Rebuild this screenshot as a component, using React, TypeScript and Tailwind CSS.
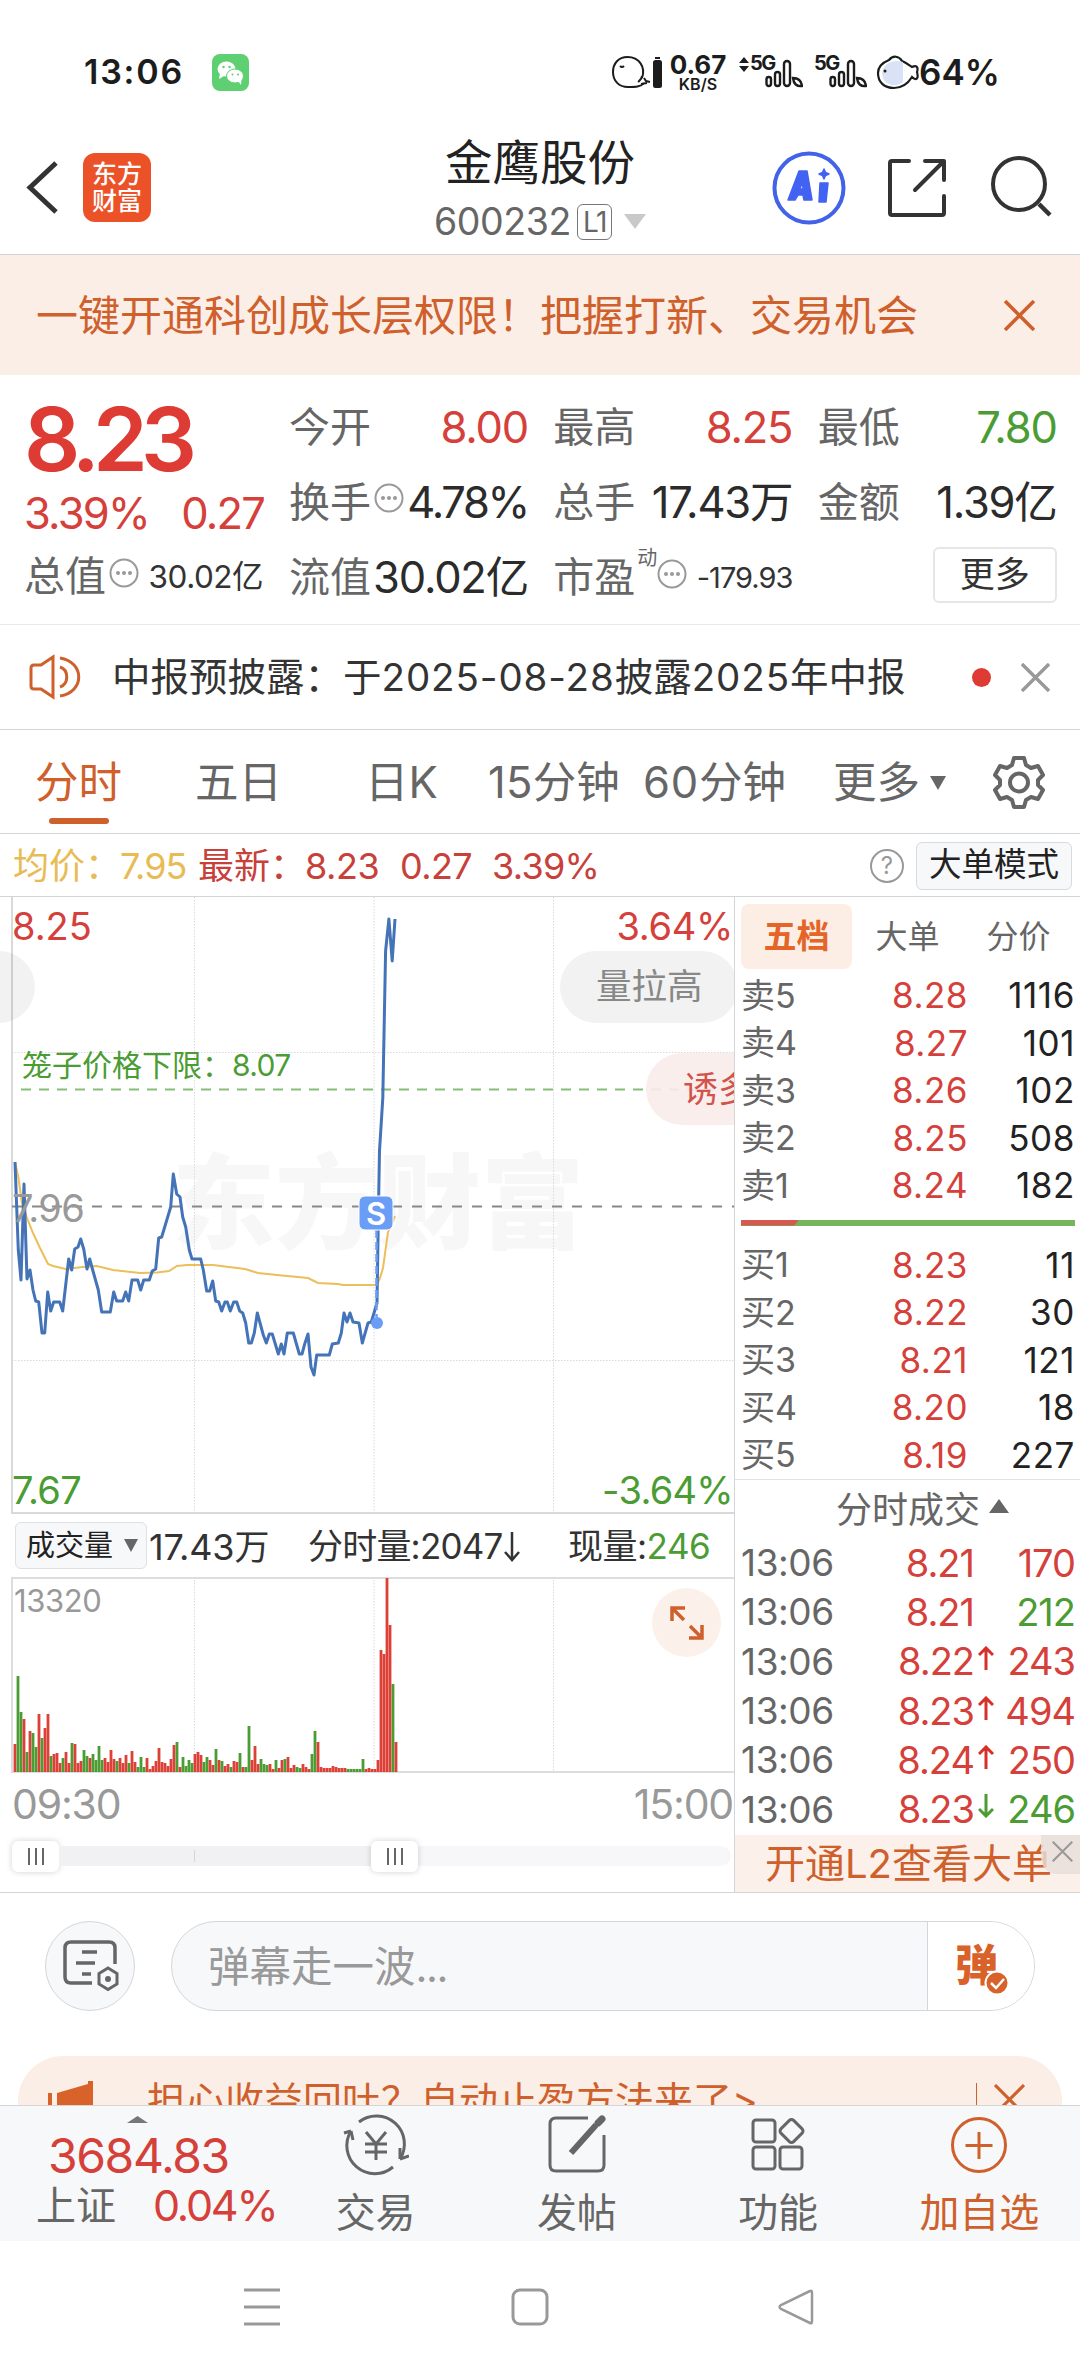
import clsx from "clsx";
import { ReactNode } from "react";

type Tone = "up" | "down" | "flat";

const toneClass: Record<Tone, string> = {
  up: "text-[#d5403a]",
  down: "text-[#4a9c33]",
  flat: "text-[#2b2b2b]",
};

const asks = [
  { label: "卖5", price: "8.28", volume: "1116" },
  { label: "卖4", price: "8.27", volume: "101" },
  { label: "卖3", price: "8.26", volume: "102" },
  { label: "卖2", price: "8.25", volume: "508" },
  { label: "卖1", price: "8.24", volume: "182" },
];

const bids = [
  { label: "买1", price: "8.23", volume: "11" },
  { label: "买2", price: "8.22", volume: "30" },
  { label: "买3", price: "8.21", volume: "121" },
  { label: "买4", price: "8.20", volume: "18" },
  { label: "买5", price: "8.19", volume: "227" },
];

const deals: { price: string; volume: string; arrow?: Tone; tone: Tone }[] = [
  { price: "8.21", volume: "170", tone: "up" },
  { price: "8.21", volume: "212", tone: "down" },
  { price: "8.22", volume: "243", arrow: "up", tone: "up" },
  { price: "8.23", volume: "494", arrow: "up", tone: "up" },
  { price: "8.24", volume: "250", arrow: "up", tone: "up" },
  { price: "8.23", volume: "246", arrow: "down", tone: "down" },
];

const priceLine =
  "15,265 18.3,353 21,383 24,287 27,382 30,373 33,393 35.7,404 38.7,405 42,436 44.7,436 47.7,395 50.7,414 53.7,405 59.7,405 62.7,414 68.7,362 71.7,373 74.7,352 78,350 80.7,342 83.7,352 87,372 89.7,362 92.7,373 98.3,393 101.7,415 110.3,415 113.7,395 116.7,404 122.7,404 125.7,395 128.7,404 132,383 137.7,383 140.7,393 143.7,383 149.3,383 152.3,374 155.7,372 158.7,341 161.7,340 170.7,310 173.3,277 176.7,297 180,300 182.7,320 185.7,330 189.3,353 192,362 200.7,362 203.3,373 206.7,394 209.7,394 212.7,384 215.7,404 218.7,405 221.7,414 225,405 227.3,405 230.3,414 233.7,405 236.7,405 239.7,414 242.7,416 245.7,426 248.7,446 251.3,446 254.3,436 257.3,416 263.3,438 266.3,446 269.3,437 272.3,437 278.3,457 281.3,447 284,457 287.3,436 293.3,436 299.3,457 302,457 304.7,447 308,437 311,470 314,478 316.7,458 329.3,458 332.3,447 338.3,446 341.3,436 344,416 347,425 350,416 353,425 359,426 362.3,446 368,426 371.3,425 377,406 378.5,310 379.5,254 382.8,201 385.6,54 388.9,22 392.2,64 395,22";

const averageLine =
  "15,265 18.3,280 22,306 27,321 33,336 40,351 48,367 53,369 65.7,372 83,370 96.7,369 113,373 140,376 157,375.5 169,374 177,369 187,368 213,368 245,372 258,376 277,378 308,381 318,386 338,387 343,388 377,388 380,381 383,371 388,335 395,319";

// one entry per minute: direction + bar height
const volumeBars =
  "r28 g96 g60 r53 g20 r41 g39 g25 r58 g34 r44 r58 g16 r18 r19 r9 g14 r20 r9 g29 r28 r9 r11 g22 g16 r14 g18 g12 g26 g12 r14 r10 r22 r13 g11 r14 r9 r17 g9 r21 r10 g5 g15 g5 r14 r3 r6 r11 r24 r10 r9 r6 r13 r27 g30 r5 g15 g6 g12 g9 r18 r20 r17 g10 g15 r12 r7 g23 r12 g11 r6 r8 g5 r11 r10 g19 r5 g5 g46 r12 r26 r8 g13 g8 g7 r8 r3 g12 r4 r12 g13 r15 r4 r7 g5 g4 r8 r5 r3 g18 g41 r30 r5 r4 r4 r4 r6 r5 r4 r4 r4 g3 g3 g3 g3 g3 g13 r3 r4 r3 r3 r12 r122 r118 r194 r147 g88 r30".split(
    " ",
  );

export default function App() {
  return (
    <div className="flex h-[2373px] w-[1080px] flex-col overflow-hidden bg-white font-['Inter','Noto_Sans_CJK_SC',sans-serif] leading-none whitespace-nowrap text-[#333]">
      <StatusBar />
      <Header />
      <Banner />
      <Quote />
      <News />
      <Tabs />
      <InfoRow />
      <div className="flex h-[996px] border-b border-[#d5d5d8]">
        <div className="flex w-[735px] flex-col border-r border-[#d5d5d8]">
          <PriceChart />
          <VolumeHeader />
          <VolumeChart />
          <TimeAxis />
        </div>
        <OrderBook />
      </div>
      <Danmu />
      <Promo />
      <BottomBar />
      <SystemNav />
    </div>
  );
}

const StatusBar = () => (
  <div className="flex h-[135px] items-center pt-[9px] pl-[84px] text-[#1c1c1c]">
    <span className="w-[128px] text-[34px] font-semibold tracking-[1.800px]">
      13:06
    </span>
    <svg width="37" height="37" viewBox="0 0 37 37">
      <rect width="37" height="37" rx="8" fill="#5fd071" />
      <ellipse cx="14.5" cy="15" rx="9" ry="7.5" fill="#fff" />
      <path d="M8 19l-1 6 5-3z" fill="#fff" />
      <ellipse cx="23" cy="22" rx="8.5" ry="7" fill="#fff" stroke="#5fd071" />
      <path d="M26 27l3 4 .5-6z" fill="#fff" />
      <g fill="#5fd071">
        <circle cx="11.5" cy="13" r="1.2" />
        <circle cx="17.5" cy="13" r="1.2" />
        <circle cx="20.5" cy="20.5" r="1" />
        <circle cx="26" cy="20.5" r="1" />
      </g>
    </svg>
    <svg className="ml-[362px]" width="54" height="36" viewBox="0 0 54 36">
      <g fill="none" stroke="#1c1c1c" strokeWidth="2">
        <path d="M31 24C35 13 28 3 16.500 3C7 3 2 10 2 18C2 27 8 33 17 33C24 33 30 33 33 29" />
        <path d="M31 22c0 3-3 5-4 6M33 24l2 3 4 1M30 30l6-1" />
        <path d="M9 12q2 2 4 0" />
      </g>
      <rect x="42" y="6" width="9" height="28" rx="2.500" fill="#1c1c1c" />
      <rect x="44" y="3" width="5" height="2" fill="#1c1c1c" />
    </svg>
    <div className="ml-1 flex w-[58px] flex-col items-center">
      <span className="h-[23px] text-[26px] leading-[23px] font-bold">0.67</span>
      <span className="h-[16px] text-[16px] leading-[16px] font-semibold">KB/S</span>
    </div>
    <svg className="ml-[11px]" width="12" height="40" viewBox="0 0 12 40">
      <path d="M6 5l5 6H1zM6 20l5-6H1z" fill="#1c1c1c" />
    </svg>
    <Signal />
    <span className="w-[11px]" />
    <Signal />
    <svg className="ml-[9px]" width="43" height="36" viewBox="0 0 43 36">
      <path
        d="M2 19C2 11 8 8 13 6C17 1 23 2 26 7C31 9 34 12 36 13C42 10 42 15 41 18C43 25 40 27 36 23C31 31 25 34 18 34C8 34 2 28 2 19Z"
        fill="#fff"
        stroke="#1c1c1c"
        strokeWidth="2.200"
      />
      <path
        d="M27 8v20q-5 4-12 3q-9-3-9-12q1-8 9-11q6-2 12 0z"
        fill="#d9e3f5"
      />
      <circle cx="9" cy="17" r="1.500" fill="#1c1c1c" />
    </svg>
    <span className="text-[35px] font-semibold">64%</span>
  </div>
);

const Signal = () => (
  <div className="flex h-[40px] w-[53px]">
    <span className="w-[23px] pt-[1px] text-[20px] font-bold -tracking-[1.600px]">
      5G
    </span>
    <svg className="-ml-[8px]" width="38" height="40" viewBox="0 0 38 40">
      <g fill="none" stroke="#1c1c1c" strokeWidth="2.400">
        <rect x="1.500" y="25" width="4.500" height="9" rx="2.200" />
        <rect x="10" y="20" width="5" height="14" rx="2.500" />
        <rect x="19" y="9" width="6" height="25" rx="3" />
        <path d="M28 26q8 0 9 8q-8 1-9-8z" />
      </g>
    </svg>
  </div>
);

const Header = () => (
  <div className="flex h-[120px] items-start border-b border-[#d2d2d5] pl-[26px]">
    <svg className="mt-[25px]" width="34" height="56" viewBox="0 0 34 56">
      <path d="M30 3L4 27.500L30 52" fill="none" stroke="#333" strokeWidth="5" />
    </svg>
    <div className="mt-[18px] ml-[23px] flex h-[69px] w-[68px] flex-col items-center justify-center rounded-xl bg-[#ec5228] text-[25px] font-medium text-white">
      <span className="mb-[2px]">东方</span>
      <span>财富</span>
    </div>
    <div className="ml-[259px] flex w-[260px] flex-col items-center">
      <h1 className="mt-[4px] text-[47.500px] text-[#222]">金鹰股份</h1>
      <div className="mt-[16px] flex h-[38px] items-center">
        <span className="text-[37.500px] -tracking-[0.400px] text-[#666]">
          600232
        </span>
        <span className="ml-[6px] flex h-[36px] w-[35px] items-center justify-center rounded-md border border-[#777] text-[28px] -tracking-[1.500px] text-[#666]">
          L1
        </span>
        <svg className="ml-3" width="22" height="15" viewBox="0 0 22 15">
          <path d="M0 0h22L11 15z" fill="#c9c9c9" />
        </svg>
      </div>
    </div>
    <svg className="mt-[16px] ml-[102px]" width="74" height="74" viewBox="0 0 74 74">
      <circle cx="37" cy="37" r="34.500" fill="none" stroke="#4263e8" strokeWidth="4" />
      <g fill="#4263f2" stroke="#4263f2" strokeWidth="1.500" strokeLinejoin="round">
        <path
          fillRule="evenodd"
          d="M27 20h8l5 29h-8l-1-5h-5l-3 5h-7zM28 38h3l-.5-8z"
        />
        <path d="M48 32h8l-2 19h-7z" />
        <path d="M52 18l1.500 3.500 3.500 1.500-3.500 1.500-1.500 3.500-1.500-3.500-3.500-1.500 3.500-1.500z" />
      </g>
    </svg>
    <svg className="mt-[24px] ml-[42px]" width="58" height="58" viewBox="0 0 58 58">
      <g fill="none" stroke="#333" strokeWidth="4" strokeLinecap="round" strokeLinejoin="round">
        <path d="M21 2H4q-2 0-2 2v50q0 2 2 2h50q2 0 2-2V37" />
        <path d="M37 2h19v19M55 3L27 31" />
      </g>
    </svg>
    <svg className="mt-[20px] ml-[44px]" width="64" height="64" viewBox="0 0 64 64">
      <circle cx="29" cy="29" r="26" fill="none" stroke="#333" strokeWidth="4" />
      <path d="M49 49l11 11" stroke="#333" strokeWidth="4.500" />
    </svg>
  </div>
);

const Cross = ({ size, color, width = 3 }: { size: number; color: string; width?: number }) => (
  <svg width={size} height={size} viewBox="0 0 30 30">
    <path d="M1 1l28 28M29 1L1 29" stroke={color} strokeWidth={width} />
  </svg>
);

const Banner = () => (
  <div className="flex h-[120px] items-center justify-between bg-[#fbeee6] pr-[45px] pl-[36px] text-[42px] text-[#cf602c]">
    <span className="pt-[2px]">一键开通科创成长层权限！把握打新、交易机会</span>
    <Cross size={31} color="#cf602c" width={3.5} />
  </div>
);

const Dots = () => (
  <svg className="ml-[3px] shrink-0" width="30" height="30" viewBox="0 0 30 30">
    <circle cx="15" cy="15" r="13.500" fill="none" stroke="#999" strokeWidth="2" />
    <g fill="#999">
      <circle cx="9" cy="15" r="2" />
      <circle cx="15" cy="15" r="2" />
      <circle cx="21" cy="15" r="2" />
    </g>
  </svg>
);

const Cell = ({
  label,
  tone = "flat",
  dots = false,
  children,
}: {
  label: string;
  tone?: Tone;
  dots?: boolean;
  children: ReactNode;
}) => (
  <div className="flex h-[75px] w-[239px] items-center">
    <span className="text-[41px] text-[#666]">{label}</span>
    {dots && (
      <span className="mb-[9px]">
        <Dots />
      </span>
    )}
    <span
      className={clsx(
        "ml-auto flex items-center text-[43.500px]",
        dots ? "-tracking-[2.300px]" : "-tracking-[1.200px]",
        toneClass[tone],
      )}
    >
      {children}
    </span>
  </div>
);

const Quote = () => (
  <section className="flex h-[250px] border-b border-[#e9e9eb] pt-[15px] pl-[24px]">
    <div className="flex w-[265px] flex-col">
      <div className="mt-[5px] h-[87px] text-[88px] font-semibold -tracking-[6.800px] text-[#dd3b33]">
        8.23
      </div>
      <div className="mt-[8px] flex h-[48px] w-[240px] items-center justify-between text-[43.500px] -tracking-[1.800px] text-[#d5403a]">
        <span>3.39%</span>
        <span>0.27</span>
      </div>
      <div className="mt-[2px] flex h-[75px] w-[239px] items-center pb-[2px]">
        <span className="text-[41px] text-[#666]">总值</span>
        <span className="mb-[8px]">
          <Dots />
        </span>
        <span className="ml-auto text-[31.500px] -tracking-[0.500px]">30.02亿</span>
      </div>
    </div>
    <div className="grid w-[768px] grid-cols-3 content-start gap-x-[25px]">
      <Cell label="今开" tone="up">8.00</Cell>
      <Cell label="最高" tone="up">8.25</Cell>
      <Cell label="最低" tone="down">7.80</Cell>
      <Cell label="换手" dots>4.78%</Cell>
      <Cell label="总手">17.43万</Cell>
      <Cell label="金额">1.39亿</Cell>
      <Cell label="流值">30.02亿</Cell>
      <div className="flex h-[75px] w-[239px] items-center text-[41px] text-[#666]">
        市盈
        <span className="mb-[40px] ml-[2px] text-[20px]">动</span>
        <span className="-ml-[3px] mb-[8px]">
          <Dots />
        </span>
        <span className="ml-auto text-[29px] -tracking-[1px] text-[#333]">
          -179.93
        </span>
      </div>
      <div className="flex h-[75px] w-[239px] items-center justify-end pb-[6px]">
        <span className="flex h-[56px] w-[124px] items-center justify-center rounded-md border-2 border-[#e6e6e8] text-[35px]">
          更多
        </span>
      </div>
    </div>
  </section>
);

const News = () => (
  <div className="flex h-[105px] items-center border-b border-[#d5d5d8] pl-[29px] text-[38.5px]">
    <svg width="54" height="46" viewBox="0 0 54 46">
      <g fill="none" stroke="#cf602c" strokeWidth="3">
        <path d="M24 3L12 11H5q-3 0-3 3v18q0 3 3 3h7l12 8z" />
        <path d="M31 13c9 3 9 17 0 20M31 4c25 4 25 34 0 38" />
      </g>
    </svg>
    <span className="ml-[29px] w-[855px]">
      中报预披露：于<span className="tracking-[0.900px]">2025-08-28</span>披露
      <span className="tracking-[0.900px]">2025</span>年中报
    </span>
    <span className="ml-[5px] h-[19px] w-[19px] rounded-full bg-[#dd3b33]" />
    <span className="ml-[30px]">
      <Cross size={29} color="#999" width={3.5} />
    </span>
  </div>
);

const Tabs = () => (
  <nav className="flex h-[104px] items-center border-b border-[#d5d5d8] pt-[3px] text-[43.500px] text-[#666]">
    <div className="relative ml-[35px] w-[160px] text-[#cf602c]">
      分时
      <span className="absolute top-[57px] left-[14px] h-[6px] w-[60px] rounded-sm bg-[#cf602c]" />
    </div>
    <span className="w-[170px]">五日</span>
    <span className="w-[123px]">日K</span>
    <span className="w-[155px]">
      <span className="tracking-[0.300px]">15</span>分钟
    </span>
    <span className="w-[190px]">
      <span className="tracking-[0.800px]">60</span>分钟
    </span>
    <span>更多</span>
    <svg className="ml-[10px]" width="16" height="14" viewBox="0 0 16 14">
      <path d="M0 0h16L8 14z" fill="#666" />
    </svg>
    <svg className="mb-[3px] ml-[46px]" width="54" height="54" viewBox="0 0 54 54">
      <g fill="none" stroke="#666" strokeWidth="4" strokeLinejoin="round">
        <path d="M22 3h10l2 7 5 3 7-2 5 9-5 5v5l5 5-5 9-7-2-5 3-2 7H22l-2-7-5-3-7 2-5-9 5-5v-5l-5-5 5-9 7 2 5-3z" />
        <circle cx="27" cy="27.500" r="9" />
      </g>
    </svg>
  </nav>
);

const InfoRow = () => (
  <div className="flex h-[63px] items-center border-b border-[#d5d5d8] pt-[1px] pl-[13px] text-[36px]">
    <span className="w-[107px] text-[#e8bb55]">均价：</span>
    <span className="w-[78px] -tracking-[0.900px] text-[#e8bb55]">7.95</span>
    <span className="w-[107px] text-[#c8403a]">最新：</span>
    <span className="w-[95px] -tracking-[0.400px] text-[#c8403a]">8.23</span>
    <span className="w-[92px] -tracking-[0.600px] text-[#c8403a]">0.27</span>
    <span className="w-[378px] -tracking-[0.700px] text-[#c8403a]">3.39%</span>
    <span className="mr-[12px] flex h-[34px] w-[34px] items-center justify-center rounded-full border-2 border-[#999] text-[24px] text-[#999]">
      ?
    </span>
    <span className="flex h-[48px] w-[156px] items-center justify-center rounded-md border border-[#d9dade] bg-[#f7f8fa] text-[32.5px] text-[#222]">
      大单模式
    </span>
  </div>
);

const PriceChart = () => (
  <div className="relative h-[617px] overflow-hidden text-[38px]">
    <span className="absolute top-[255px] left-[172px] text-[103px] font-black text-[#f7f7f7]">
      东方财富
    </span>
    <svg className="absolute inset-0" width="734" height="617" viewBox="0 0 734 617">
      <g stroke="#d9d9dc" strokeDasharray="1.500 1.500">
        <path d="M194.500 0V617M374 0V617M553.500 0V617M12 155.500H734M12 463.500H734" />
      </g>
      <path d="M12 0V616H734" fill="none" stroke="#d9d9dc" strokeWidth="2" />
      <path d="M12 309.500H734" stroke="#888" strokeWidth="2" strokeDasharray="10 10" />
      <path d="M21 192.500H734" stroke="#85be78" strokeWidth="2" strokeDasharray="10 8" />
      <polyline points={averageLine} fill="none" stroke="#ecbe5c" strokeWidth="2" />
      <polyline points={priceLine} fill="none" stroke="#4473b8" strokeWidth="3" strokeLinejoin="round" />
    </svg>
    <span className="absolute top-[10px] left-[12px] text-[#d5403a]">8.25</span>
    <span className="absolute top-[10px] right-[1px] -tracking-[0.300px] text-[#d5403a]">3.64%</span>
    <span className="absolute top-[292px] left-[12px] -tracking-[0.600px] text-[#999]">7.96</span>
    <span className="absolute top-[574px] left-[12px] -tracking-[0.700px] text-[#4a9c33]">7.67</span>
    <span className="absolute top-[574px] right-[1px] -tracking-[0.700px] text-[#4a9c33]">-3.64%</span>
    <span className="absolute top-[153px] left-[22px] text-[30px] text-[#4a9c33]">
      笼子价格下限：<span className="-tracking-[0.600px]">8.07</span>
    </span>
    <span className="absolute top-[54px] -left-[40px] h-[72px] w-[75px] rounded-full bg-black/[0.05]" />
    <span className="absolute top-[54px] left-[560px] flex h-[72px] w-[178px] items-center rounded-full bg-[#f2f2f2] pl-[36px] text-[35.500px] text-[#888]">
      量拉高
    </span>
    <span className="absolute top-[156px] left-[646px] flex h-[72px] w-[180px] items-center rounded-full bg-[#faeceb]/90 pl-[37px] text-[35px] text-[#d2534c]">
      诱多
    </span>
    <svg className="absolute top-[298px] left-[358px]" width="38" height="140" viewBox="0 0 38 140">
      <path d="M18.500 35V122" stroke="#6a9df5" strokeWidth="2.500" strokeDasharray="8 4" />
      <circle cx="19" cy="128" r="6" fill="#6a9df5" />
      <rect x="1" y="1" width="34" height="34" rx="6" fill="#6a9df5" stroke="#fff" />
    </svg>
    <span className="absolute top-[300px] left-[359px] flex h-[32px] w-[34px] items-center justify-center text-[31px] font-semibold text-white">
      S
    </span>
  </div>
);

const VolumeHeader = () => (
  <div className="flex h-[63px] items-center pl-[15px] text-[35px]">
    <span className="flex h-[47px] w-[132px] items-center rounded-md border border-[#dfe0e4] bg-[#f7f8fa] pl-[10px] text-[29px] text-[#222]">
      成交量
      <svg className="ml-[11px]" width="14" height="13" viewBox="0 0 14 13">
        <path d="M0 0h14L7 13z" fill="#666" />
      </svg>
    </span>
    <span className="ml-[2px] w-[159px] pt-[2px]">
      <span className="text-[36px] -tracking-[0.200px]">17.43</span>万
    </span>
    <span className="flex w-[260px] items-center pt-[2px] -tracking-[0.800px]">
      分时量:2047
      <svg width="18" height="30" viewBox="0 0 18 30">
        <path d="M9 0v28M2 20l7 8 7-8" fill="none" stroke="#333" strokeWidth="2.500" />
      </svg>
    </span>
    <span className="pt-[2px] -tracking-[0.500px]">
      现量:<span className="text-[#4a9c33]">246</span>
    </span>
  </div>
);

const VolumeChart = () => (
  <div className="relative h-[196px] overflow-hidden">
    <svg width="734" height="196" viewBox="0 0 734 196">
      <path d="M194.500 0V196M374 0V196M553.500 0V196" stroke="#d9d9dc" strokeDasharray="1.500 1.500" />
      <path d="M734 1H12V195H734" fill="none" stroke="#dddde0" strokeWidth="2" />
      {volumeBars.map((bar, i) => {
        const height = Number(bar.slice(1));
        return (
          <rect
            key={i}
            x={13.6 + i * 3}
            y={195 - height}
            width="2.800"
            height={height}
            fill={bar[0] === "r" ? "#dc4036" : "#4a9c33"}
          />
        );
      })}
    </svg>
    <span className="absolute top-[8px] left-[14px] text-[31px] -tracking-[0.400px] text-[#999]">
      13320
    </span>
    <span className="absolute top-[11px] left-[652px] flex h-[69px] w-[69px] items-center justify-center rounded-full bg-[#fbf1ea]">
      <svg width="34" height="34" viewBox="0 0 34 34">
        <g fill="none" stroke="#cf602c" strokeWidth="3.500">
          <path d="M2 15V2h13M3 3l11 11M32 19v13H19M31 31L20 20" />
        </g>
      </svg>
    </span>
  </div>
);

const Thumb = () => (
  <span className="flex h-[31px] w-[47px] items-center justify-center gap-[5px] rounded-md bg-white shadow-[0_0_6px_rgba(0,0,0,0.18)]">
    <i className="h-[17px] w-[2px] bg-[#666]" />
    <i className="h-[17px] w-[2px] bg-[#666]" />
    <i className="h-[17px] w-[2px] bg-[#666]" />
  </span>
);

const TimeAxis = () => (
  <div className="flex flex-col pl-[12px]">
    <div className="flex h-[62px] items-center justify-between pr-[1px] text-[41px] -tracking-[1.200px] text-[#999]">
      <span>09:30</span>
      <span>15:00</span>
    </div>
    <div className="mt-[11px] mr-[3px] flex h-[20px] items-center rounded-full bg-[#f7f7f9]">
      <Thumb />
      <span className="flex h-full w-[312px] items-center bg-[#f1f1f3] pl-[135px]">
        <i className="h-[12px] w-px bg-[#d5d5d8]" />
      </span>
      <Thumb />
    </div>
  </div>
);

const BookRow = ({ label, price, volume }: { label: string; price: string; volume: string }) => (
  <div className="flex h-[48px] items-center text-[34px]">
    <span className="w-[90px] text-[#666]">{label}</span>
    <span className="w-[137px] text-right text-[35px] tracking-[0.500px] text-[#d5403a]">
      {price}
    </span>
    <span className="flex-1 text-right text-[35px] tracking-[0.600px] text-[#222]">
      {volume}
    </span>
  </div>
);

const OrderBook = () => (
  <div className="flex w-[345px] flex-col">
    <div className="flex h-[583px] flex-col border-b border-[#e2e2e4] pt-[7px] pr-[5px] pl-[6px]">
      <div className="mb-[3px] flex h-[65px] items-center text-[32px] text-[#666]">
        <span className="flex h-[65px] w-[111px] items-center justify-center rounded-lg bg-[#fceee4] text-[33px] font-bold text-[#e56428]">
          五档
        </span>
        <span className="w-[111px] text-center">大单</span>
        <span className="w-[111px] text-center">分价</span>
      </div>
      {asks.map((row) => (
        <BookRow key={row.label} {...row} />
      ))}
      <div className="mt-[10px] mb-[16px] flex h-[6px] shrink-0 bg-[#77b45c]">
        <i className="h-full w-[58px] bg-[#d5594f] [clip-path:polygon(0_0,100%_0,92%_100%,0_100%)]" />
      </div>
      {bids.map((row) => (
        <BookRow key={row.label} {...row} />
      ))}
    </div>
    <div className="flex h-[59px] items-center pl-[101px] text-[36px] text-[#666]">
      分时成交
      <svg className="mb-[8px] ml-[9px]" width="20" height="14" viewBox="0 0 20 14">
        <path d="M10 0l10 14H0z" fill="#666" />
      </svg>
    </div>
    {deals.map((deal, i) => (
      <div
        key={i}
        className="flex h-[49.3px] shrink-0 items-center pr-[5px] pb-[2px] pl-[6px] text-[38px] -tracking-[1px]"
      >
        <span className="w-[140px] text-[37px] -tracking-[0.400px] text-[#666]">13:06</span>
        <span className="w-[93px] text-right text-[#d5403a]">{deal.price}</span>
        <span className="flex w-[20px] justify-end">
          {deal.arrow && (
            <svg
              className={clsx("mb-[6px] ml-[2px]", deal.arrow === "down" && "rotate-180")}
              width="16"
              height="24"
              viewBox="0 0 16 24"
            >
              <path
                d="M8 24V2M1 9l7-7 7 7"
                fill="none"
                stroke={deal.arrow === "up" ? "#d5302a" : "#4a9c33"}
                strokeWidth="3"
              />
            </svg>
          )}
        </span>
        <span className={clsx("flex-1 text-right", toneClass[deal.tone])}>
          {deal.volume}
        </span>
      </div>
    ))}
    <div className="relative flex flex-1 items-center bg-[#fbf1ea] pt-[2px] pl-[30px] text-[40px] text-[#cf602c]">
      开通L2查看大单
      <span className="absolute top-0 right-0 flex h-[39px] w-[39px] items-center justify-center rounded-bl-[16px] bg-[#e9dfda]/80 pb-[6px] pl-[4px]">
        <Cross size={21} color="#999" />
      </span>
    </div>
  </div>
);

const Danmu = () => (
  <div className="flex h-[163px] shrink-0 items-start pt-[28px] pl-[45px]">
    <span className="flex h-[90px] w-[90px] items-center justify-center rounded-full border border-[#d5d6da] bg-[#f7f8fa]">
      <svg className="ml-[2px]" width="56" height="52" viewBox="0 0 56 52">
        <g fill="none" stroke="#666" strokeWidth="3.500">
          <path d="M29 43H8q-6 0-6-6V8q0-6 6-6h38q6 0 6 6v16" />
          <path d="M19 12h15M13 23h19M19 34h9" />
          <path d="M45 28l9 5.500v10.500l-9 5.500-9-5.500V33.500z" strokeWidth="3" />
        </g>
        <circle cx="45" cy="39" r="3" fill="#666" />
      </svg>
    </span>
    <div className="ml-[36px] flex h-[90px] w-[864px] items-center overflow-hidden rounded-full border border-[#d5d6da] bg-[#f7f8fa] text-[41.500px] text-[#999]">
      <span className="flex-1 pt-[3px] pl-[36px]">
        弹幕走一波<span className="-tracking-[1.500px]">...</span>
      </span>
      <span className="relative flex h-full w-[107px] items-center border-l border-[#d5d6da] bg-white pb-[2px] pl-[27px] text-[43px] font-black text-[#d9622a]">
        弹
        <svg className="absolute top-[48px] left-[56px]" width="26" height="26" viewBox="0 0 26 26">
          <circle cx="13" cy="13" r="11.500" fill="#d9622a" stroke="#fff" strokeWidth="2" />
          <path d="M7 13l5 5 8-9" fill="none" stroke="#fff" strokeWidth="2.500" />
        </svg>
      </span>
    </div>
  </div>
);

const Promo = () => (
  <div className="h-[49px] shrink-0 overflow-hidden px-[18px]">
    <div className="flex h-[90px] items-start rounded-[46px] bg-[#fbeee6] pt-[25px] text-[39px] text-[#cf602c]">
      <svg className="ml-[30px]" width="46" height="44" viewBox="0 0 46 44">
        <path d="M0 12h4v20H0zM9 12L40 3V0h5v44h-5v-4L9 32z" fill="#d9622a" />
      </svg>
      <span className="ml-[53px] w-[829px]">担心收益回吐？自动止盈方法来了&gt;</span>
      <i className="mt-[2px] mr-[17px] h-[38px] w-px bg-[#cf602c]" />
      <span className="mt-[3px]">
        <Cross size={31} color="#cf602c" />
      </span>
    </div>
  </div>
);

const BarItem = ({
  label,
  className,
  children,
}: {
  label: string;
  className?: string;
  children: ReactNode;
}) => (
  <div className={clsx("flex w-[201.5px] flex-col items-center text-[40px]", className)}>
    <svg
      className="mt-[6px] mb-[15px]"
      width="66"
      height="66"
      viewBox="0 0 66 66"
      fill="none"
      stroke="currentColor"
      strokeWidth="3"
    >
      {children}
    </svg>
    {label}
  </div>
);

const BottomBar = () => (
  <div className="flex h-[136px] shrink-0 border-t border-[#d5d5d8] bg-[#f7f8fa] text-[#666]">
    <div className="w-[275px]">
      <svg className="mt-[10px] ml-[127px]" width="21" height="7" viewBox="0 0 21 7">
        <path d="M10.500 0L21 7H0z" fill="#777" />
      </svg>
      <div className="mt-[9px] pl-[48px] text-[48px] -tracking-[1.400px] text-[#d5403a]">
        3684.83
      </div>
      <div className="mt-[4px] flex items-center pl-[36px] text-[40px]">
        上证
        <span className="ml-[37px] text-[43px] -tracking-[2.200px] text-[#d5403a]">
          0.04%
        </span>
      </div>
    </div>
    <BarItem label="交易">
      <path d="M16 10A28 28 0 0 1 57 47M50 55A28 28 0 0 1 8 19" />
      <path d="M57 47l9-3M57 47V36M8 19l-7 2M8 19l2 9" />
      <path d="M23 20l10 12 10-12M33 31v17M22 32h22M22 40h22" />
    </BarItem>
    <BarItem label="发帖">
      <path d="M44 6H12q-6 0-6 6v41q0 6 6 6h42q6 0 6-6V23" />
      <path d="M27 41L52 13" strokeWidth="6" />
      <path d="M54 11l4-4" strokeWidth="7" strokeLinecap="round" />
    </BarItem>
    <BarItem label="功能">
      <rect x="8" y="8" width="22" height="22" rx="3" />
      <rect x="8" y="35" width="22" height="22" rx="3" />
      <rect x="35" y="35" width="22" height="22" rx="3" />
      <rect x="37.500" y="10" width="18" height="18" rx="3" transform="rotate(45 46.500 19)" />
    </BarItem>
    <BarItem label="加自选" className="text-[#cf602c]">
      <circle cx="33" cy="33" r="26.500" />
      <path d="M33 20v27M19.500 33.500h27" />
    </BarItem>
  </div>
);

const SystemNav = () => (
  <div className="flex h-[132px] shrink-0 items-center pl-[244px]">
    <svg width="572" height="38" viewBox="0 0 572 38">
      <g fill="none" stroke="#999" strokeWidth="3">
        <path d="M0 2h36M0 19h36M0 36h36" />
        <rect x="269" y="2" width="34" height="34" rx="7" />
        <path d="M566 3L537 17q-3 2 0 4L566 35q2 1 2-2V5q0-3-2-2z" strokeWidth="2.500" />
      </g>
    </svg>
  </div>
);
